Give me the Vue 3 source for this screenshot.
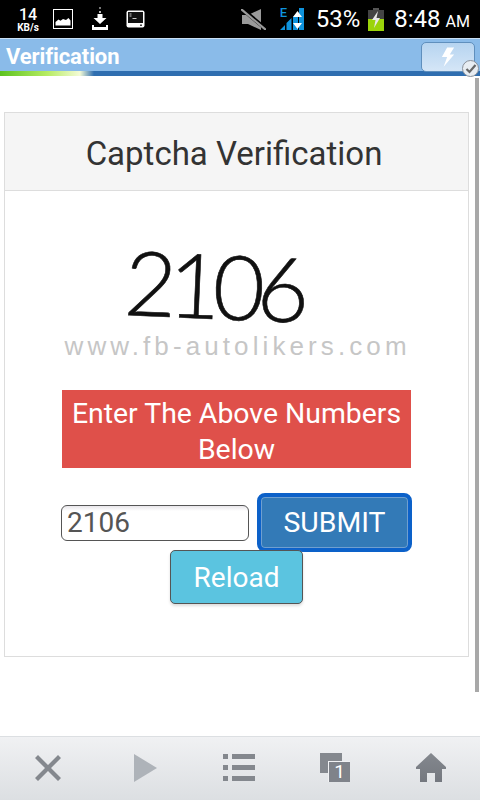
<template>
  <div class="phone">
    <header class="status-bar">
      <div class="status-left">
        <div class="speed"><b>14</b><small>KB/s</small></div>
        <svg class="ic-pic" width="20" height="20" viewBox="0 0 20 20">
          <rect x="0.5" y="0.5" width="19" height="19" fill="#000" stroke="#fff" />
          <path d="M2.500 16.500V13l3-2.500 2 1.200 2.500-1.700 3 1 2.500-2 2 2.500v5z" fill="#fff" />
        </svg>
        <svg class="ic-dl" width="18" height="24" viewBox="0 0 18 24">
          <rect x="8" y="0" width="2" height="2" fill="#777" />
          <rect x="8" y="4" width="2" height="2" fill="#bbb" />
          <path d="M6.500 7h5v4h4l-6.500 6-6.500-6h4z" fill="#fff" />
          <rect x="1" y="20" width="16" height="3" fill="#fff" />
          <rect x="1" y="18" width="2" height="3" fill="#fff" />
          <rect x="15" y="18" width="2" height="3" fill="#fff" />
        </svg>
        <svg class="ic-term" width="19" height="18" viewBox="0 0 19 18">
          <rect x="0.5" y="0.5" width="18" height="17" rx="2" fill="#fff" />
          <rect x="2" y="2" width="15" height="11" fill="#111" />
          <path d="M3.500 4h2M3.500 6h2M6.500 8.500h4" stroke="#ccc" stroke-width="1" />
          <rect x="14" y="14.500" width="2" height="1.500" fill="#444" />
        </svg>
      </div>
      <div class="status-right">
        <svg class="ic-mute" width="25" height="21" viewBox="0 0 25 21">
          <path d="M1 6h6l13-6v21L7 15H1z" fill="#9a9a9a" />
          <path d="M1 0l24 20" stroke="#000" stroke-width="4" />
          <path d="M0 0l25 21" stroke="#9a9a9a" stroke-width="2.200" />
        </svg>
        <div class="signal">
          <span class="edge">E</span>
          <svg width="24" height="23" viewBox="0 0 24 23">
            <path d="M0 22l5-5v5zM6.500 22v-7l5-5v12zM19 22V0l5-1v23z" fill="#0f93dd" />
            <path d="M13 22V9l5-5v18z" fill="#0f93dd" />
            <path d="M17.500 3l4.500 6h-9zM17.500 21l-4.500-6h9z" fill="#fff" />
          </svg>
        </div>
        <span class="pct">53%</span>
        <svg class="ic-batt" width="16" height="23" viewBox="0 0 16 23">
          <rect x="5" y="0" width="6" height="2" fill="#555" />
          <rect x="0" y="2" width="16" height="9" fill="#444" />
          <rect x="0" y="11" width="16" height="12" fill="#9bd40a" />
          <path d="M10 3L4 12h3.500L6 20l6-10H8.500z" fill="#e8e8e8" />
        </svg>
        <span class="clock">8:48<small>AM</small></span>
      </div>
    </header>

    <div class="title-bar">
      <span class="title">Verification</span>
      <div class="bolt-btn">
        <svg width="14" height="22" viewBox="0 0 16 24">
          <path d="M7 1h8l-5 8h5L3 23l4-11H1z" fill="#fff" />
        </svg>
        <span class="check">
          <svg width="12" height="10" viewBox="0 0 12 10">
            <path d="M1.500 5l3 3 6-7" fill="none" stroke="#666" stroke-width="2.200" />
          </svg>
        </span>
      </div>
    </div>
    <div class="progress"><div class="progress-fill"></div></div>

    <main class="content">
      <section class="card">
        <h1 class="card-head">Captcha Verification</h1>
        <div class="card-body">
          <div class="captcha">
            <div class="digits">2106</div>
            <div class="watermark">www.fb-autolikers.com</div>
          </div>
          <div class="notice">Enter The Above Numbers Below</div>
          <div class="form">
            <input class="code" type="text" value="2106" />
            <button class="submit" type="button">SUBMIT</button>
            <button class="reload" type="button">Reload</button>
          </div>
        </div>
      </section>
      <div class="scrollbar"></div>
    </main>

    <footer class="toolbar">
      <svg width="30" height="30" viewBox="0 0 30 30">
        <path d="M2 5l3-3 10 10L25 2l3 3-10 10 10 10-3 3-10-10L5 28l-3-3 10-10z" fill="#84888e" />
      </svg>
      <svg width="30" height="30" viewBox="0 0 30 30">
        <path d="M6 1l23 14L6 29z" fill="#aeb3b9" />
      </svg>
      <svg width="32" height="30" viewBox="0 0 32 30">
        <g fill="#84888e">
          <rect x="0" y="1" width="5" height="5" /><rect x="9" y="1" width="23" height="5" />
          <rect x="0" y="12" width="5" height="5" /><rect x="9" y="12" width="23" height="5" />
          <rect x="0" y="23" width="5" height="5" /><rect x="9" y="23" width="23" height="5" />
        </g>
      </svg>
      <div class="tabs-ic">
        <div class="tab-back"></div>
        <div class="tab-front">1</div>
      </div>
      <svg width="32" height="30" viewBox="0 0 32 30">
        <defs>
          <linearGradient id="home-fill" x1="0" y1="0" x2="0" y2="1">
            <stop offset="0" stop-color="#84888e" />
            <stop offset="1" stop-color="#74787f" />
          </linearGradient>
        </defs>
        <path d="M16 0l15 14v2h-4v13h-7v-9h-8v9H5V16H1v-2z" fill="url(#home-fill)" />
      </svg>
    </footer>
  </div>
</template>

<script setup>
</script>

<style>
html, body {
  margin: 0;
  background: #fff;
}
</style>

<style scoped>
.phone {
  display: flex;
  flex-direction: column;
  width: 480px;
  height: 800px;
  overflow: hidden;
  font-family: Roboto, "Liberation Sans", sans-serif;
  background: #fff;
}

.status-bar {
  flex: 0 0 38px;
  display: flex;
  align-items: center;
  justify-content: space-between;
  padding: 0 10px 0 17px;
  background: #000;
  color: #fff;
}

.status-left {
  display: flex;
  align-items: center;
}

.speed {
  display: flex;
  flex-direction: column;
  align-items: center;
  width: 22px;
  line-height: 1;
}

.speed b {
  font-size: 16px;
  font-weight: 500;
  line-height: 15px;
}

.speed small {
  margin-top: 1px;
  font-size: 10px;
  font-weight: 700;
  line-height: 9px;
}

.ic-pic {
  margin-left: 14px;
}

.ic-dl {
  margin-left: 18px;
}

.ic-term {
  margin-left: 17px;
}

.status-right {
  display: flex;
  align-items: center;
}

.ic-mute {
  margin-right: 14px;
}

.signal {
  position: relative;
  width: 24px;
  height: 23px;
}

.signal svg {
  display: block;
}

.edge {
  position: absolute;
  left: 0;
  top: -2px;
  color: #0f93dd;
  font-size: 13px;
  font-weight: 500;
  line-height: 13px;
}

.pct {
  margin-left: 12px;
  font-size: 24px;
}

.ic-batt {
  margin-left: 8px;
}

.clock {
  margin-left: 10px;
  font-size: 24px;
}

.clock small {
  margin-left: 5px;
  font-size: 16px;
}

.title-bar {
  flex: 0 0 33px;
  min-height: 0;
  display: flex;
  align-items: center;
  justify-content: space-between;
  padding-right: 5px;
  padding-left: 6px;
  border-top: 1px solid #c9e0f5;
  box-sizing: border-box;
  background: #8abbe9;
}

.title {
  margin-top: 3px;
  color: #fff;
  font-size: 22px;
  font-weight: 700;
  letter-spacing: -0.1px;
}

.bolt-btn {
  position: relative;
  display: flex;
  align-items: center;
  justify-content: center;
  box-sizing: border-box;
  width: 54px;
  height: 30px;
  margin-top: 4px;
  border: 1px solid #5f8fbd;
  border-radius: 5px;
  background: linear-gradient(#b6d4f0, #d5e6f7);
}

.check {
  position: absolute;
  right: -5px;
  bottom: -6px;
  display: flex;
  align-items: center;
  justify-content: center;
  width: 15px;
  height: 15px;
  border: 1px solid #8a9099;
  border-radius: 50%;
  background: #e8edf2;
}

.progress {
  flex: 0 0 5px;
  background: #2f6eb0;
}

.progress-fill {
  width: 94px;
  height: 100%;
  background: linear-gradient(to right, #5cc21f, #b6ec62 50%, #f4fbd6 85%, rgba(255, 255, 255, 0));
}

.content {
  position: relative;
  flex: 1;
  min-height: 0;
  padding: 36px 11px 0 4px;
}

.card {
  border: 1px solid #ddd;
  height: 545px;
  box-sizing: border-box;
}

.card-head {
  margin: 0;
  height: 78px;
  box-sizing: border-box;
  padding-right: 5px;
  border-bottom: 1px solid #ddd;
  background: #f5f5f5;
  color: #333;
  font-size: 33px;
  font-weight: 400;
  line-height: 82px;
  text-align: center;
}

.card-body {
  display: flex;
  flex-direction: column;
  align-items: center;
}

.captcha {
  width: 344px;
  height: 125px;
  margin-top: 47px;
  text-align: center;
}

.digits {
  height: 94px;
  padding-right: 48px;
  color: #111;
  font-family: Lato, sans-serif;
  font-size: 90px;
  font-weight: 300;
  letter-spacing: -8px;
  line-height: 94px;
  transform: rotate(2.5deg);
  -webkit-text-stroke: 0.6px #111;
}

.watermark {
  padding-right: 6px;
  color: #c6c6c6;
  font-family: "Liberation Sans", sans-serif;
  font-size: 26px;
  letter-spacing: 4.1px;
  line-height: 28px;
  white-space: nowrap;
}

.notice {
  box-sizing: border-box;
  width: 349px;
  margin-top: 27px;
  padding: 6px 8px 0;
  background: #df504a;
  color: #fff;
  font-size: 28.4px;
  line-height: 36px;
  text-align: center;
}

.form {
  display: flex;
  flex-wrap: wrap;
  align-items: center;
  justify-content: center;
  width: 352px;
  margin-top: 25px;
}

.code {
  box-sizing: border-box;
  width: 188px;
  height: 36px;
  margin-right: 8px;
  padding: 0 5px;
  border: 1px solid #555;
  border-radius: 6px;
  outline: 0;
  background: linear-gradient(#e8e6ea, #fff 5px);
  color: #555;
  font-family: Roboto, sans-serif;
  font-size: 28px;
}

.submit {
  box-sizing: border-box;
  width: 155px;
  height: 59px;
  border: 4px solid #0c61c9;
  border-radius: 8px;
  background: #337ab7;
  box-shadow: inset 0 0 0 1px #6f9fd0;
  color: #fff;
  font-family: Roboto, sans-serif;
  font-size: 28.4px;
}

.reload {
  box-sizing: border-box;
  width: 133px;
  height: 54px;
  margin-top: -2px;
  border: 1px solid #555;
  border-radius: 5px;
  background: #5bc4e0;
  box-shadow: 0 2px 3px #ddd;
  color: #fff;
  font-family: Roboto, sans-serif;
  font-size: 28px;
}

.scrollbar {
  position: absolute;
  top: 2px;
  right: 1px;
  width: 4px;
  height: 614px;
  background: #a8a8a8;
}

.toolbar {
  flex: 0 0 64px;
  display: flex;
  align-items: center;
  justify-content: space-around;
  box-sizing: border-box;
  padding: 0 0 2px;
  border-top: 1px solid #dcdfe2;
  background: linear-gradient(#f0f1f3, #dcdfe2);
}

.tabs-ic {
  position: relative;
  width: 30px;
  height: 29px;
}

.tab-back {
  width: 22px;
  height: 20px;
  background: #84888e;
}

.tab-front {
  position: absolute;
  right: 0;
  bottom: 0;
  width: 22px;
  height: 21px;
  box-sizing: border-box;
  border-top: 1px solid #f0f1f3;
  border-left: 1px solid #f0f1f3;
  background: #7f838a;
  color: #fff;
  font-size: 19px;
  line-height: 20px;
  text-align: center;
}
</style>
